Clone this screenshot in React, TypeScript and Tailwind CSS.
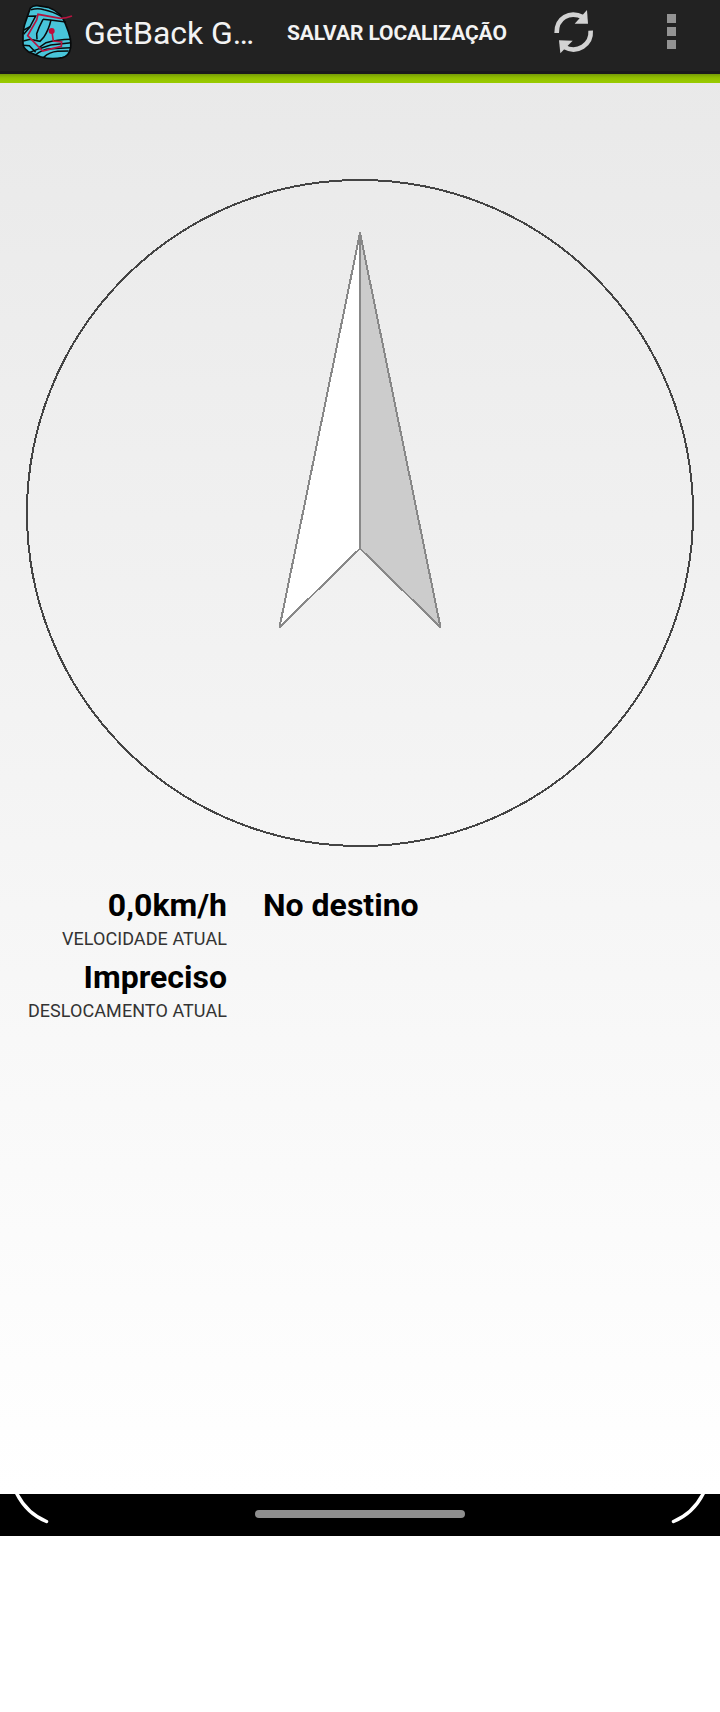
function AppLogo() {
  return (
    <svg className="h-[66px] w-[75px] shrink-0" viewBox="0 0 225 198" fill="none">
      <path
        d="M61 24C67 18 74 16 82 17L114 22C140 31 159 50 168 76C180 104 185 121 182 142C179 162 169 170 157 173C134 178 112 177 91 170L55 155C43 145 38 140 39 128L39 102C41 86 42 76 46 67Z"
        fill="#48c5da"
        stroke="#080a0b"
        strokeWidth="5"
      />
      <g stroke="#080a0b" strokeWidth="4.5">
        <path d="M62 29Q84 23 102 29Q132 35 151 48" />
        <path d="M53 49L77 48L59 82L41 103" />
        <path d="M60 80L42 90" />
        <path d="M99 58Q86 82 80 101L81 118" />
        <path d="M123 60Q116 90 101 112L90 124L60 118L40 123" />
        <path d="M99 58L120 60L168 66" />
        <path d="M39 136L58 137L77 157" />
        <path d="M88 142L108 128Q142 119 183 118" />
        <path d="M57 158L88 146L122 135L183 128" />
        <path d="M75 166Q96 147 122 146L181 143" />
        <path d="M101 172Q118 156 143 154L176 153" />
      </g>
      <path
        d="M186 48Q168 55 151 55L84 43L80 60L53 107L98 153L154 139L155 126L130 123L126 96"
        stroke="#b51440"
        strokeWidth="5"
      />
      <circle cx="125" cy="93" r="9" fill="#c20c3c" />
    </svg>
  );
}

function Header() {
  return (
    <header className="h-[83px] shrink-0 bg-[#222222]">
      <div className="flex h-[66px] items-center pl-[10px]">
        <AppLogo />
        <h1 className="-ml-px w-[181px] text-[32px] leading-[38px] tracking-[-0.05px] whitespace-nowrap text-[#f3f3f3]">GetBack G…</h1>
        <button className="ml-[22px] w-[233px] text-left text-[21px] leading-6 font-bold tracking-[-0.1px] whitespace-nowrap text-[#f3f3f3]">
          SALVAR LOCALIZAÇÃO
        </button>
        <button aria-label="Atualizar" className="flex h-[66px] w-[64px] items-start pl-[30px]">
          <svg className="h-[66px] w-[50px] shrink-0" viewBox="90 0 150 198" fill="none">
            <path d="M110 99C109 55 148 31 190 52" stroke="#d2d2d2" strokeWidth="14" />
            <path d="M201 30L204 71H164Z" fill="#d2d2d2" />
            <path d="M212 92C215 134 172 162 133 141" stroke="#d2d2d2" strokeWidth="14" />
            <path d="M117 121L158 122L121 160Z" fill="#d2d2d2" />
          </svg>
        </button>
        <button aria-label="Mais opções" className="mb-[3px] ml-[83px] flex flex-col gap-1">
          <span className="h-[9px] w-[9px] bg-[#939393]" />
          <span className="h-[9px] w-[9px] bg-[#939393]" />
          <span className="h-[9px] w-[9px] bg-[#939393]" />
        </button>
      </div>
      <div className="mt-[5px] h-[3px] bg-[#1b1b1b]" />
      <div className="h-[9px] bg-[linear-gradient(#759b08_0px,#8db801_3px,#95c300_5px,#99cc00_9px)]" />
    </header>
  );
}

function Compass() {
  return (
    <svg className="mt-[96px] h-[668px] w-full shrink-0" viewBox="0 179 720 668" fill="none" shapeRendering="crispEdges">
      <circle cx="360" cy="513" r="333" stroke="#444444" strokeWidth="2" />
      <g stroke="#888888" strokeWidth="2" strokeLinejoin="round">
        <path d="M360 233L279.500 627.300L360 548.500Z" fill="#ffffff" />
        <path d="M360 233L440.500 627.300L360 548.500Z" fill="#cccccc" />
      </g>
    </svg>
  );
}

function Reading({ value, label }: { value: string; label: string }) {
  return (
    <div className="flex h-[72px] flex-col items-end">
      <strong className="text-[32px] leading-[38px] font-bold text-black">{value}</strong>
      <span className="mt-[4px] text-[18px] leading-[22px] tracking-[0.07px] text-[#333333]">{label}</span>
    </div>
  );
}

export default function App() {
  return (
    <div className="flex h-[1712px] w-[720px] flex-col bg-white font-['Roboto',sans-serif]">
      <div className="flex h-[1494px] shrink-0 flex-col bg-[linear-gradient(#e8e8e8_0px,#ffffff_1494px)]">
        <Header />
        <Compass />
        <main className="mt-[39px] flex">
          <section className="w-[227px]">
            <Reading value="0,0km/h" label="VELOCIDADE ATUAL" />
            <Reading value="Impreciso" label="DESLOCAMENTO ATUAL" />
          </section>
          <strong className="ml-9 text-[32px] leading-[38px] font-bold text-black">No destino</strong>
        </main>
      </div>
      <footer className="flex h-[42px] shrink-0 items-start justify-between bg-black">
        <svg className="h-[42px] w-[60px]" viewBox="0 0 60 42" fill="none">
          <path d="M16 -2Q26 19 46.500 27.500" stroke="#ffffff" strokeWidth="3.500" strokeLinecap="round" />
        </svg>
        <div className="mt-4 h-2 w-[210px] rounded-full bg-[#8e8e8e]" />
        <svg className="h-[42px] w-[60px]" viewBox="0 0 60 42" fill="none">
          <path d="M44 -2Q34 19 13.500 27.500" stroke="#ffffff" strokeWidth="3.500" strokeLinecap="round" />
        </svg>
      </footer>
    </div>
  );
}
